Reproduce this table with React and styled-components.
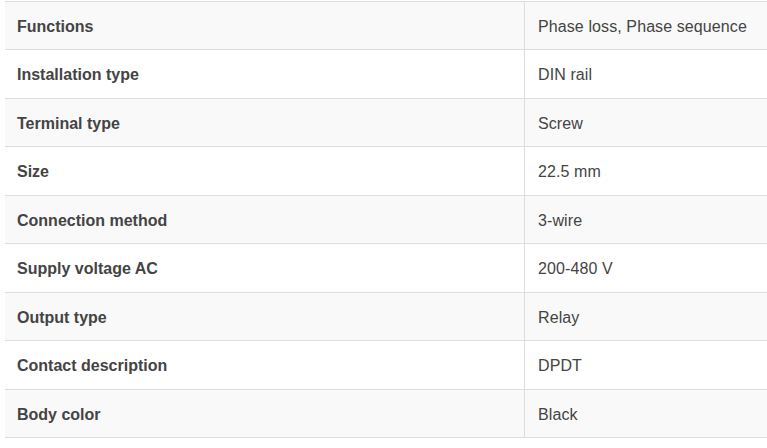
import React from 'react';
import styled, { createGlobalStyle } from 'styled-components';

const GlobalStyle = createGlobalStyle`
  html, body {
    margin: 0;
    padding: 0;
    background: #fff;
  }
  body {
    font-family: "Liberation Sans", Arial, sans-serif;
    overflow: hidden;
  }
`;

const Wrap = styled.div`
  padding: 1px 0 0 5px;
`;

const SpecTable = styled.table`
  width: 762px;
  border-collapse: collapse;
  table-layout: fixed;
  font-size: 16px;
  color: #444;
`;

const Row = styled.tr`
  background: ${p => (p.$striped ? '#f9f9f9' : '#fff')};
`;

const Cell = styled.td`
  border-top: 1px solid #ddd;
  border-bottom: 1px solid #ddd;
  padding: 13px 12px 11px 12px;
  height: 23.44px;
  line-height: 23.44px;
  vertical-align: middle;
  white-space: nowrap;
`;

const Label = styled(Cell)`
  width: 495px;
  font-weight: bold;
`;

const Value = styled(Cell)`
  border-left: 1px solid #ddd;
  padding-left: 13px;
  letter-spacing: 0.1px;
`;

const specs = [
  ['Functions', 'Phase loss, Phase sequence'],
  ['Installation type', 'DIN rail'],
  ['Terminal type', 'Screw'],
  ['Size', '22.5 mm'],
  ['Connection method', '3-wire'],
  ['Supply voltage AC', '200-480 V'],
  ['Output type', 'Relay'],
  ['Contact description', 'DPDT'],
  ['Body color', 'Black'],
];

export default function App() {
  return (
    <>
      <GlobalStyle />
      <Wrap>
        <SpecTable>
          <tbody>
            {specs.map(([k, v], i) => (
              <Row key={k} $striped={i % 2 === 0}>
                <Label>{k}</Label>
                <Value>{v}</Value>
              </Row>
            ))}
          </tbody>
        </SpecTable>
      </Wrap>
    </>
  );
}
